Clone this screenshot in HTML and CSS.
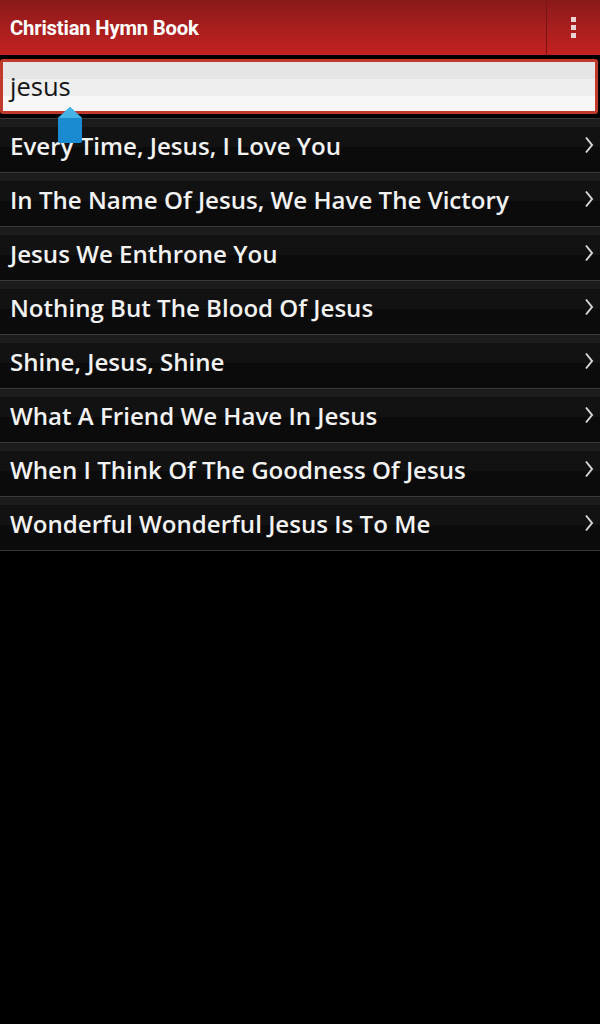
FILE: index.html
```html
<!DOCTYPE html>
<html>
<head>
  <title>Christian Hymn Book</title>
  <link rel="stylesheet" href="styles.css">
</head>
<body>
  <div class="action-bar">
    <div class="app-title">Christian Hymn Book</div>
    <div class="overflow-button">
      <span class="dot"></span>
      <span class="dot"></span>
      <span class="dot"></span>
    </div>
  </div>

  <div class="search-box">
    <div class="search-field">jesus</div>
    <svg class="cursor-handle" width="26" height="38" viewBox="0 0 26 38">
      <path d="M13 0 L25 11 L25 34 Q25 36 23 36 L3 36 Q1 36 1 34 L1 11 Z" fill="#1a8bd0"/>
      <path d="M13 0 L25 11 L1 11 Z" fill="#45b3e6"/>
    </svg>
  </div>

  <div class="hymn-list">
    <div class="hymn-row"><span class="hymn-title">Every Time, Jesus, I Love You</span><svg class="chevron" width="10" height="18" viewBox="0 0 10 18"><path d="M2 1.5 L8 9 L2 16.5" fill="none" stroke="#d6d6d6" stroke-width="2"/></svg></div>
    <div class="hymn-row"><span class="hymn-title">In The Name Of Jesus, We Have The Victory</span><svg class="chevron" width="10" height="18" viewBox="0 0 10 18"><path d="M2 1.5 L8 9 L2 16.5" fill="none" stroke="#d6d6d6" stroke-width="2"/></svg></div>
    <div class="hymn-row"><span class="hymn-title">Jesus We Enthrone You</span><svg class="chevron" width="10" height="18" viewBox="0 0 10 18"><path d="M2 1.5 L8 9 L2 16.5" fill="none" stroke="#d6d6d6" stroke-width="2"/></svg></div>
    <div class="hymn-row"><span class="hymn-title">Nothing But The Blood Of Jesus</span><svg class="chevron" width="10" height="18" viewBox="0 0 10 18"><path d="M2 1.5 L8 9 L2 16.5" fill="none" stroke="#d6d6d6" stroke-width="2"/></svg></div>
    <div class="hymn-row"><span class="hymn-title">Shine, Jesus, Shine</span><svg class="chevron" width="10" height="18" viewBox="0 0 10 18"><path d="M2 1.5 L8 9 L2 16.5" fill="none" stroke="#d6d6d6" stroke-width="2"/></svg></div>
    <div class="hymn-row"><span class="hymn-title">What A Friend We Have In Jesus</span><svg class="chevron" width="10" height="18" viewBox="0 0 10 18"><path d="M2 1.5 L8 9 L2 16.5" fill="none" stroke="#d6d6d6" stroke-width="2"/></svg></div>
    <div class="hymn-row"><span class="hymn-title">When I Think Of The Goodness Of Jesus</span><svg class="chevron" width="10" height="18" viewBox="0 0 10 18"><path d="M2 1.5 L8 9 L2 16.5" fill="none" stroke="#d6d6d6" stroke-width="2"/></svg></div>
    <div class="hymn-row"><span class="hymn-title">Wonderful Wonderful Jesus Is To Me</span><svg class="chevron" width="10" height="18" viewBox="0 0 10 18"><path d="M2 1.5 L8 9 L2 16.5" fill="none" stroke="#d6d6d6" stroke-width="2"/></svg></div>
  </div>
</body>
</html>
```

FILE: styles.css
```css
body
{
  margin:0;
  background-color:#000;
  font-family:"Open Sans", "DejaVu Sans", sans-serif;
  width:600px;
  height:1024px;
}

.action-bar
{
  height:55px;
  display:flex;
  align-items:center;
  background:linear-gradient(#8a1919, #a81e1e 50%, #c32222);
}

.app-title
{
  flex:1;
  padding-left:10px;
  color:#fff;
  font-family:Roboto, "Open Sans", sans-serif;
  font-weight:bold;
  font-size:20.3px;
  letter-spacing:-0.2px;
}

.overflow-button
{
  width:53px;
  height:55px;
  border-left:1px solid #7a1414;
  display:flex;
  flex-direction:column;
  align-items:center;
  justify-content:center;
  gap:3px;
}

.dot
{
  width:5px;
  height:5px;
  background-color:#ecd4d4;
}

.search-box
{
  position:relative;
  padding:4px 2px 4px 0;
}

.search-field
{
  height:49px;
  border:3px solid #c0392b;
  border-radius:3px;
  background:linear-gradient(#e5e5e5 0, #e5e5e5 17px, #eeeeee 17px, #eeeeee 34px, #f7f7f7 34px);
  padding-left:7px;
  line-height:49px;
  font-size:25.5px;
  color:#151515;
}

.cursor-handle
{
  position:absolute;
  left:57px;
  top:52px;
}

.hymn-row
{
  height:53px;
  border-top:1px solid #383838;
  background:linear-gradient(#1c1c1c 0, #1c1c1c 8px, #121212 8px, #121212 28px, #0b0b0b 28px);
  display:flex;
  align-items:center;
  justify-content:space-between;
  padding:0 6px 0 10px;
}

.hymn-row:last-child
{
  border-bottom:1px solid #383838;
}

.hymn-title
{
  color:#f2f2f2;
  font-size:24.1px;
  font-weight:600;
}

.chevron
{
  margin-top:-1px;
}
```
